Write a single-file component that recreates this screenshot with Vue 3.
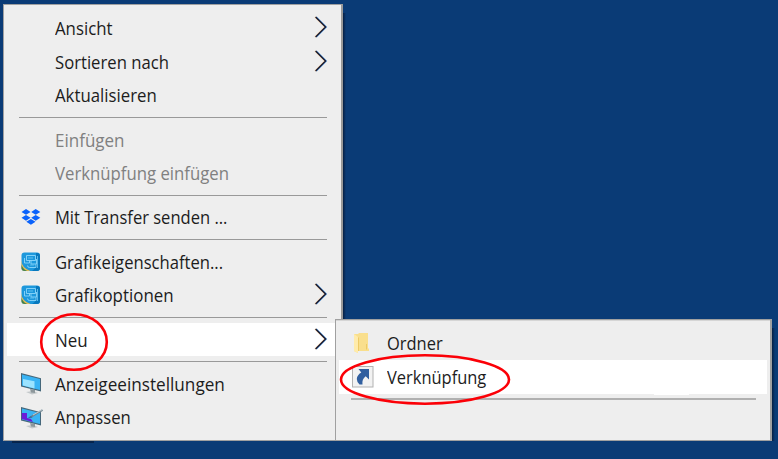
<template>
  <div class="desktop">
    <nav class="menu main">
      <template v-for="(group, g) in groups" :key="g">
        <hr v-if="g > 0" />
        <div
          v-for="item in group"
          :key="item.label"
          class="item"
          :class="{ disabled: item.disabled, active: item.active }"
        >
          <span class="icon">
            <svg v-if="item.icon === 'dropbox'" width="20" height="18" viewBox="0 0 20 18">
              <path fill="#0a62fb" d="M5 1l4.6 2.9L5 6.8.5 3.9zM14.7 1l4.6 2.9-4.6 2.9-4.5-2.9zM5 6.9l4.6 2.9L5 12.7.5 9.8zM14.7 6.9l4.6 2.9-4.6 2.9-4.5-2.9zM9.9 10.9l4.6 2.8-4.6 3-4.6-3z" />
            </svg>
            <svg v-else-if="item.icon === 'graphics'" width="20" height="20" viewBox="0 0 20 20">
              <rect x=".5" y=".5" width="18.5" height="18.5" rx="3" fill="#1d98dc" />
              <path fill="#0878bd" d="M15 1h1q3 0 3 3v12q0 3-3 3h-5q5-3 4-8z" />
              <path fill="#e7bd55" d="M.5 8q0 8 9 11H4q-3.500 0-3.500-3z" />
              <path fill="#42824e" d="M.5 13q2 5 6 6H4q-3.500 0-3.500-3z" />
              <path fill="none" stroke="#8bd6fa" stroke-width=".9" d="M5.500 3.500h9v5h-9zM3.500 6v5h5v-3M10 9v3h5.500V7M6.500 13.500q0 2 2 2h6.500v-3.500" />
              <path fill="none" stroke="#70c9f4" stroke-width=".8" d="M7 6h5M9 13h4M16.500 4v12" />
            </svg>
            <svg v-else-if="item.icon" width="22" height="23" viewBox="0 0 22 23">
              <path fill="#c3c8ca" d="M5 20l7-1 5 2-6 1.500z" />
              <path fill="#8d979b" d="M9 17l5 1v3l-4-.5z" />
              <path fill="#45677a" d="M0 1l20 5.200v13.300L0 14.500z" />
              <path fill="#39b3f4" d="M1 2.500l18 4.600v11L1 13.600z" />
              <path v-if="item.icon === 'display'" fill="#9be3ff" d="M2 7l11.500 2.200v7.200L2 13.600z" />
              <template v-else>
                <path fill="#6a1bd8" d="M.8 7H6v5l4 1 2 3-11.200-3z" />
                <path stroke="#708590" stroke-width="2" d="M9 11.500L21.500 4" />
                <path stroke="#d1dbe0" stroke-width=".8" d="M12 9L21.500 3.500" />
                <path fill="#326ca2" d="M6 12.500l4-2.500 1.500 1.500z" />
              </template>
            </svg>
          </span>
          <span class="label" :style="{ transform: `scaleX(${item.stretch})` }">{{ item.label }}</span>
          <svg v-if="item.sub" class="arrow" width="14" height="22" viewBox="0 0 14 22">
            <path class="fringe-warm" d="M1 1l10 10L1 21" />
            <path class="fringe-cool" d="M2.300 1l10 10-10 10" />
            <path class="line" d="M1.600 1l10 10-10 10" />
          </svg>
        </div>
      </template>
    </nav>

    <nav class="menu flyout">
      <div class="item">
        <span class="icon">
          <svg width="22" height="22" viewBox="0 0 22 22">
            <path fill="#f9df8d" d="M2 2h4l1-1h9v15l1 1v2H6v2l-4-2z" />
            <path fill="#ffebaa" d="M2 2l4 3v16l-4-2z" />
            <path fill="#edca66" d="M6 5l1 1v13H6zM14 12h1v5l-1 1z" />
          </svg>
        </span>
        <span class="label">Ordner</span>
      </div>
      <div class="item active">
        <span class="icon">
          <svg width="22" height="22" viewBox="0 0 22 22">
            <rect x=".5" y=".5" width="20.500" height="20.500" fill="#f2f2f2" stroke="#b2b2b2" />
            <path fill="#315f9f" d="M6.500 3H17v10.500l-3.300-3.300q-4 3-3.200 8.300H7.500q-2.700-2.500-2.700-5.500.2-4 4.500-6.500z" />
          </svg>
        </span>
        <span class="label">Verknüpfung</span>
      </div>
      <hr />
    </nav>

    <!-- red markers around the two entries to click -->
    <svg class="marks" width="778" height="459" viewBox="0 0 778 459">
      <ellipse cx="74" cy="342" rx="32.800" ry="27.800" />
      <ellipse cx="425" cy="379.500" rx="84" ry="24.200" />
    </svg>
  </div>
</template>

<script setup>
const groups = [
  [
    { label: 'Ansicht', stretch: 0.96, sub: true },
    { label: 'Sortieren nach', stretch: 0.952, sub: true },
    { label: 'Aktualisieren', stretch: 0.96 },
  ],
  [
    { label: 'Einfügen', stretch: 0.972, disabled: true },
    { label: 'Verknüpfung einfügen', stretch: 0.957, disabled: true },
  ],
  [{ label: 'Mit Transfer senden ...', stretch: 0.945, icon: 'dropbox' }],
  [
    { label: 'Grafikeigenschaften...', stretch: 0.949, icon: 'graphics' },
    { label: 'Grafikoptionen', stretch: 0.966, icon: 'graphics', sub: true },
  ],
  [{ label: 'Neu', stretch: 0.97, sub: true, active: true }],
  [
    { label: 'Anzeigeeinstellungen', stretch: 0.98, icon: 'display' },
    { label: 'Anpassen', stretch: 0.953, icon: 'personalize' },
  ],
];
</script>

<style>
body{
  background:#0a3b76;
}
</style>

<style scoped>
.desktop{
  position:relative;
  width:778px;
  height:459px;
  overflow:hidden;
  background:#0a3b76;
  font-family:"Open Sans", "Noto Sans", sans-serif;
  font-size:17.5px;
  color:#1c1c1c;
}
.menu{
  position:absolute;
  box-sizing:border-box;
  background:#eee;
  border:1px solid #a0a0a0;
}
.main{
  left:3px;
  top:4px;
  width:340px;
  height:437px;
  padding:6.3px 3px 0;
  border-right:2px solid #999;
}
.main::before{
  content:'';
  position:absolute;
  left:339px;
  top:8px;
  width:3px;
  height:306px;
  background:linear-gradient(90deg, #061f43, #0a3b76);
}
.main::after{
  content:'';
  position:absolute;
  left:8px;
  top:436px;
  width:82px;
  height:2px;
  background:#06244c;
}
.flyout{
  left:335px;
  top:319px;
  width:437px;
  height:122px;
  padding:6.4px 3px 0;
  border-width:1px 2px 1px 1.5px;
  box-shadow:inset 0 1px #d5d5d5;
}
.flyout::before{
  content:'';
  position:absolute;
  left:436px;
  top:8px;
  width:3px;
  height:113px;
  background:linear-gradient(90deg, #061f43, #0a3b76);
}
/* small white tab under the highlighted row */
.flyout::after{
  content:'';
  position:absolute;
  left:318px;
  top:73px;
  width:35px;
  height:2px;
  background:#fff;
}
.item{
  display:flex;
  align-items:center;
  height:33.6px;
}
.active{
  background:#fff;
}
.disabled{
  color:#808080;
}
.icon{
  display:flex;
  flex:none;
  width:34px;
  padding-left:14px;
}
.flyout .icon{
  width:35px;
  padding-left:13px;
}
.label{
  white-space:nowrap;
  transform:scaleX(.94);
  transform-origin:left center;
}
.arrow{
  margin-left:auto;
  margin-right:10px;
  margin-top:-2px;
}
.arrow path{
  fill:none;
  stroke-width:1.3;
}
.arrow .fringe-warm{
  stroke:#f2c28a;
}
.arrow .fringe-cool{
  stroke:#5b9fe0;
}
.arrow .line{
  stroke:#15152c;
}
hr{
  height:1px;
  margin:4.800px 11px 4.900px 12px;
  border:0;
  background:#999;
}
.flyout hr{
  height:2px;
  background:#b0b0b0;
}
.marks{
  position:absolute;
  left:0;
  top:0;
}
.marks ellipse{
  fill:none;
  stroke:#fb0007;
  stroke-width:2.6;
}
</style>
